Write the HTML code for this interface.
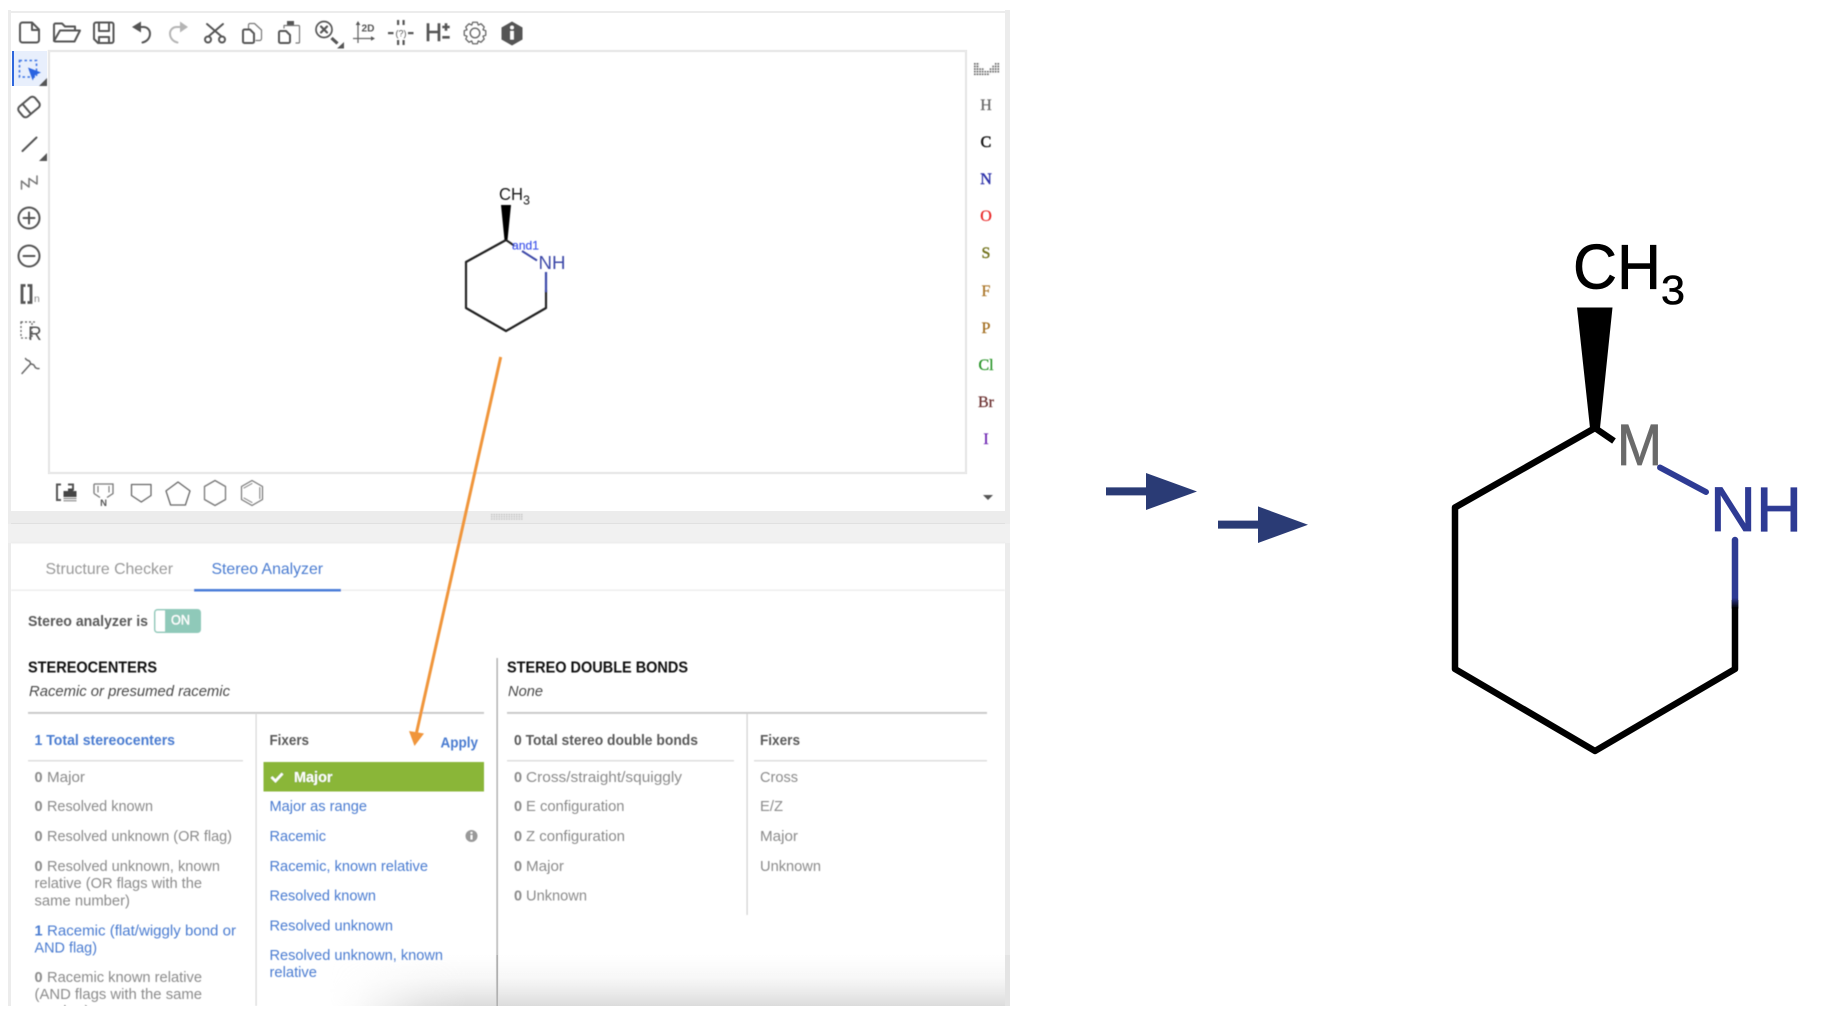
<!DOCTYPE html>
<html lang="en">
<head>
<meta charset="utf-8">
<title>Stereo Analyzer</title>
<style>
html,body{margin:0;padding:0;background:#fff;width:1824px;height:1028px;overflow:hidden}
svg{display:block;font-family:"Liberation Sans",sans-serif}
.g{fill:#8b8b8b;font-size:14.5px}
.gb{fill:#8b8b8b;font-size:14.5px;font-weight:700}
.b{fill:#4a7bd0;font-size:14.5px}
.bb{fill:#4a7bd0;font-size:14.5px;font-weight:700}
.d{fill:#5a5a5a;font-size:14.5px;font-weight:700}
.h{fill:#111;font-size:15.5px;font-weight:700}
.i{fill:#4a4a4a;font-size:14.5px;font-style:italic}
.el{font-family:"Liberation Serif",serif;font-size:16px;text-anchor:middle;stroke-width:.25px}
.ic{fill:none;stroke:#555;stroke-width:2;stroke-linejoin:round;stroke-linecap:round}
</style>
</head>
<body>
<svg width="1824" height="1028" viewBox="0 0 1824 1028" xmlns="http://www.w3.org/2000/svg">
<defs>
<filter id="soft" x="-2%" y="-2%" width="104%" height="104%"><feGaussianBlur stdDeviation="0.45"/></filter>
<filter id="soft2" x="-2%" y="-2%" width="104%" height="104%"><feGaussianBlur stdDeviation="0.3"/></filter>
<linearGradient id="vg" x1="0" y1="0" x2="0" y2="1"><stop offset="0" stop-color="#dcdcdc" stop-opacity="0"/><stop offset="0.45" stop-color="#dcdcdc" stop-opacity="0.22"/><stop offset="0.75" stop-color="#dcdcdc" stop-opacity="0.6"/><stop offset="1" stop-color="#dcdcdc"/></linearGradient>
<linearGradient id="hg" x1="0" y1="0" x2="1" y2="0"><stop offset="0" stop-color="#000"/><stop offset="0.04" stop-color="#222"/><stop offset="0.14" stop-color="#ccc"/><stop offset="0.2" stop-color="#fff"/><stop offset="1" stop-color="#fff"/></linearGradient>
<mask id="hm" maskUnits="userSpaceOnUse" x="330" y="950" width="680" height="60"><rect x="330" y="950" width="680" height="60" fill="url(#hg)"/></mask>
<clipPath id="pc"><rect x="0" y="0" width="1824" height="1006"/></clipPath>
<linearGradient id="nb" gradientUnits="userSpaceOnUse" x1="0" y1="598" x2="0" y2="608"><stop offset="0" stop-color="#2f3a94"/><stop offset="1" stop-color="#000"/></linearGradient>
<pattern id="dots" width="2.600" height="2.600" patternUnits="userSpaceOnUse" x="974" y="63"><rect width="1.700" height="1.700" fill="#666"/></pattern>
<pattern id="grip" width="2.500" height="2.200" patternUnits="userSpaceOnUse" x="491" y="514"><rect width="1.500" height="1.200" fill="#bdbdbd"/></pattern>
</defs>

<g clip-path="url(#pc)">
<!-- panel frame -->
<rect x="8" y="10" width="1002" height="996" fill="#fff"/>
<rect x="8" y="10" width="3" height="996" fill="#ececec"/>
<rect x="1005" y="10" width="5" height="996" fill="#ececec"/>
<rect x="8" y="11" width="1000" height="2" fill="#ececec"/>
<rect x="8" y="524" width="1002" height="19" fill="#f1f1f1"/>
<rect x="11" y="511" width="994" height="13" fill="#ececec"/>
<rect x="11" y="523" width="994" height="1" fill="#e0e0e0"/>
<!-- canvas -->
<rect x="49" y="51" width="917" height="422" fill="#fff" stroke="#e9e9e9" stroke-width="2.500"/>
<rect x="13" y="51" width="34" height="35" fill="#e8effc"/>
<rect x="12" y="51" width="2" height="35" fill="#2f67dd"/>

<g filter="url(#soft)">
<!-- splitter -->
<rect x="491" y="514" width="32" height="6.500" fill="url(#grip)"/>

<!-- top toolbar -->
<path class="ic" d="M20 25a2.500 2.500 0 0 1 2.500-2.500H32l7 7V40a2.500 2.500 0 0 1-2.500 2.500h-14A2.500 2.500 0 0 1 20 40Z M32 23v7h7" stroke-width="2.300"/>
<path class="ic" d="M54 41V25a1.500 1.500 0 0 1 1.500-1.500H62l3 3h10v4 M54 41l6-10.500h20L74.500 41.500H55" stroke-width="1.800"/>
<path class="ic" d="M94 24.500a2 2 0 0 1 2-2h15.500a2 2 0 0 1 2 2V41a2 2 0 0 1-2 2H98l-4-4Z M99 23v8h10V23 M99 43v-6h10v6" stroke-width="2.200"/>
<path class="ic" d="M136 27h8a6.500 6.500 0 0 1 6 6.500c0 4.500-3 8-7.500 9" stroke-width="2.500"/><path d="M141 21.500v11L132 27Z" fill="#555"/>
<path class="ic" d="M186 27h-9a6.500 6.500 0 0 0-7 6.500c0 4.500 3 8 7.500 9" stroke-width="2.300" style="stroke:#b5b5b5"/><path d="M180 21.500v11L188 27Z" fill="#b5b5b5"/>
<g class="ic" stroke-width="2.200"><path d="M207 24l14 12 M223 24l-14 12"/><circle cx="208" cy="39.500" r="3"/><circle cx="222" cy="39.500" r="3"/></g>
<path class="ic" d="M248.500 29v-4a1.500 1.500 0 0 1 1.500-1.500h4.500l7 6.500v8.500a2 2 0 0 1-2 2h-3.500" stroke-width="1.200" style="stroke:#777;stroke-width:1.200"/>
<path class="ic" d="M243 31a1.500 1.500 0 0 1 1.500-1.500H250l4 4v8a1.500 1.500 0 0 1-1.500 1.500h-8a1.500 1.500 0 0 1-1.500-1.500Z" stroke-width="2.200"/>
<path class="ic" d="M284 28v-2.500h14.500a1 1 0 0 1 1 1V42a1 1 0 0 1-1 1H296" style="stroke:#777;stroke-width:1.200"/><path class="ic" d="M279 32.500a1.500 1.500 0 0 1 1.500-1.500H286l4 4v6.500a1.500 1.500 0 0 1-1.500 1.500h-8a1.500 1.500 0 0 1-1.500-1.500Z" stroke-width="2.200"/><rect x="287" y="21" width="7" height="4" fill="#555"/>
<circle cx="324" cy="29.500" r="8" class="ic" style="stroke-width:1.700"/><path class="ic" d="M321 26.500l6 6 M327 26.500l-6 6" style="stroke-width:2.200"/><path d="M331.500 38l6 5.500" stroke="#555" stroke-width="3.200" fill="none"/><path d="M344 42v6.500h-7Z" fill="#555"/>
<path d="M358 24v19 M353 38.500h18" fill="none" stroke="#666" stroke-width="1.300"/><path d="M358 21l-2.300 4h4.600Z M375 38.500l-4-2.300v4.600Z" fill="#555"/>
<text x="361.500" y="31.500" font-size="10.500" font-weight="700" fill="#555" textLength="13" lengthAdjust="spacingAndGlyphs">2D</text>
<g fill="#555"><rect x="397" y="20" width="2.200" height="5"/><rect x="402.500" y="20" width="2.200" height="5"/><rect x="397" y="40" width="2.200" height="5"/><rect x="402.500" y="40" width="2.200" height="5"/><rect x="388" y="32" width="5.500" height="2.200"/><rect x="408" y="32" width="5.500" height="2.200"/></g>
<text x="401" y="36.500" font-size="9" fill="#555" text-anchor="middle">(?)</text>
<text x="425" y="41" font-size="24.700" fill="#555" stroke="#555" stroke-width=".5" textLength="17" lengthAdjust="spacingAndGlyphs">H</text>
<path d="M446 23.300v7.400 M442.300 27h7.400 M442.300 37.300h7.400" stroke="#555" stroke-width="2.600" fill="none"/>
<circle cx="475" cy="33" r="4.800" fill="none" stroke="#666" stroke-width="1.400"/>
<path transform="translate(475 33)" fill="none" stroke="#666" stroke-width="1.300" stroke-linejoin="round" d="M-2.290-10.760L2.290-10.760 3.290-7.950 5.990-9.230 9.230-5.990 7.950-3.290 10.760-2.290 10.760 2.290 7.950 3.290 9.230 5.990 5.990 9.230 3.290 7.950 2.290 10.760-2.290 10.760-3.290 7.950-5.990 9.230-9.230 5.990-7.950 3.290-10.760 2.290-10.760-2.290-7.950-3.290-9.230-5.990-5.990-9.230-3.290-7.950Z"/>
<path d="M512 21.500l10.500 6v12l-10.500 6-10.500-6v-12Z" fill="#555"/><circle cx="512" cy="27.500" r="1.900" fill="#fff"/><rect x="510.200" y="31" width="3.600" height="8.500" fill="#fff"/>

<!-- left toolbar -->
<rect x="19.500" y="60.500" width="17" height="16.500" fill="none" stroke="#3b73e6" stroke-width="1.600" stroke-dasharray="2.500 2.500"/>
<path d="M28 67.500l13 5-5.800 2.500-2.500 5.500Z" fill="#2a63e0"/>
<path d="M47 78v8h-8Z" fill="#555"/>
<g transform="rotate(-40 29 107)"><rect x="18.500" y="100.500" width="21" height="13" rx="3.500" class="ic" stroke-width="2.200"/><path d="M26 100.500v13" class="ic" stroke-width="1.800"/></g>
<path class="ic" d="M22.500 151l14-13.500" stroke-width="2.500"/>
<path d="M47 153v8h-8Z" fill="#555"/>
<path class="ic" d="M21.500 189v-8l7.500 6v-8.500l8 5.500v-8" style="stroke:#777;stroke-width:1.500"/>
<circle cx="29" cy="218" r="10.500" class="ic" stroke-width="2"/><path class="ic" d="M23.500 218h11 M29 212.500v11" stroke-width="2.400"/>
<circle cx="29" cy="256" r="10.500" class="ic" stroke-width="2"/><path class="ic" d="M23.500 256h11" stroke-width="2.400"/>
<path d="M25.500 285.500h-3.500v17h3.500 M27.500 285.500h3.500v17h-3.500" fill="none" stroke="#555" stroke-width="2.800"/>
<text x="34" y="302" font-size="10.500" fill="#888">n</text>
<rect x="21" y="322" width="11" height="16" fill="none" stroke="#666" stroke-width="1.300" stroke-dasharray="2 2"/><path d="M21 322h15" stroke="#666" stroke-width="1.300" stroke-dasharray="2 2"/>
<text x="28" y="340" font-size="19" fill="#555">R</text>
<path d="M22 373.500l8.500-9.500 M25.500 358.500c1 2.500 4 1.500 4.500 3.500s1 2 3 2.500 1 2.500 3 3.500 2 .5 3 .5" fill="none" stroke="#666" stroke-width="1.500" stroke-linecap="round"/>

<!-- template toolbar -->
<path d="M61 484.500h-4v15.500h4" fill="none" stroke="#555" stroke-width="2"/><path d="M68 484.500h5v6" fill="none" stroke="#555" stroke-width="2"/>
<rect x="63.500" y="491" width="13" height="6" fill="#444"/><rect x="68" y="488.500" width="5" height="3" fill="#444"/><path d="M63.500 498.500h13 M63.500 500.800h13" stroke="#777" stroke-width="1"/>
<path d="M94 484h19v9.500l-6 4 M100 497.500l-6-4 M94 484v9.500" fill="none" stroke="#777" stroke-width="1.300"/><path d="M98 486v6.500 M109 486v6.500" stroke="#777" stroke-width="1.100"/>
<text x="103.500" y="506" font-size="9.500" font-weight="700" fill="#555" text-anchor="middle">N</text>
<path d="M131.500 484.500h19.500v11l-9.700 6.500-9.800-6.500Z" class="ic" style="stroke:#666;stroke-width:1.300"/>
<path d="M178 482l12 8.900-4.600 14.100h-14.800L166 490.900Z" class="ic" style="stroke:#666;stroke-width:1.300"/>
<path d="M215 480.500l10.500 6v13l-10.500 6-10.500-6v-13Z" class="ic" style="stroke:#777;stroke-width:1.300"/>
<path d="M252 480.500l10.500 6v13l-10.500 6-10.500-6v-13Z" class="ic" style="stroke:#777;stroke-width:1.200"/><path d="M244 488l8-4.500 M259.800 487.500v11 M244 498l8 4.500" class="ic" style="stroke:#777;stroke-width:1"/>

<!-- element column -->
<g fill="url(#dots)"><rect x="974" y="63" width="5.200" height="13"/><rect x="979.200" y="68.200" width="5.200" height="7.800"/><rect x="984.400" y="70.800" width="5.200" height="5.200"/><rect x="989.600" y="68.200" width="2.600" height="5.200"/><rect x="992.200" y="65.600" width="2.600" height="7.800"/><rect x="994.800" y="63" width="5.200" height="10.400"/></g>
<text class="el" x="986" y="110" fill="#666" stroke="#666">H</text>
<text class="el" x="986" y="147" fill="#111" stroke="#111" style="stroke-width:.5px">C</text>
<text class="el" x="986" y="184" fill="#2a2ea8" stroke="#2a2ea8" style="stroke-width:.4px">N</text>
<text class="el" x="986" y="221" fill="#e82424" stroke="#e82424">O</text>
<text class="el" x="986" y="258" fill="#6f7019" stroke="#6f7019" style="stroke-width:.4px">S</text>
<text class="el" x="986" y="296" fill="#a87224" stroke="#a87224">F</text>
<text class="el" x="986" y="333" fill="#a06a1a" stroke="#a06a1a">P</text>
<text class="el" x="986" y="370" fill="#1f8f1f" stroke="#1f8f1f">Cl</text>
<text class="el" x="986" y="407" fill="#6a2f2f" stroke="#6a2f2f">Br</text>
<text class="el" x="986" y="444" fill="#6a22b0" stroke="#6a22b0">I</text>
<path d="M983 495h10l-5 5Z" fill="#555"/>

<!-- small molecule -->
<path d="M506 240L466 262V308L506 331L546 308V290" fill="none" stroke="#222" stroke-width="2.200" stroke-linejoin="round"/>
<path d="M546 292V272" stroke="#3d48a8" stroke-width="2.200"/>
<path d="M501 205h10l-3.500 35h-3Z" fill="#000"/>
<path d="M506 240l8 5.500" stroke="#222" stroke-width="2"/>
<path d="M522 251l15 9.500" stroke="#3d48a8" stroke-width="2"/>
<text x="499" y="200" font-size="17.500" fill="#1a1a1a" textLength="24" lengthAdjust="spacingAndGlyphs">CH</text>
<text x="523" y="204.500" font-size="12.500" fill="#1a1a1a">3</text>
<text x="512" y="249.500" font-size="12" fill="#3f55ea" stroke="#3f55ea" stroke-width=".2" textLength="27" lengthAdjust="spacingAndGlyphs">and1</text>
<text x="538.500" y="269" font-size="18" fill="#3d48a8" textLength="27" lengthAdjust="spacingAndGlyphs">NH</text>

<!-- tabs -->
<rect x="11" y="542" width="994" height="1.500" fill="#ececec"/>
<rect x="11" y="589.500" width="994" height="1.500" fill="#eeeeee"/>
<text x="45.500" y="574" font-size="16" fill="#999" textLength="127.500" lengthAdjust="spacingAndGlyphs">Structure Checker</text>
<text x="211.500" y="574" font-size="16" fill="#4a7bd0" textLength="111.500" lengthAdjust="spacingAndGlyphs">Stereo Analyzer</text>
<rect x="194" y="589" width="147" height="2.500" fill="#4a7bd8"/>

<text x="28" y="626" class="d" style="font-size:15px" textLength="120" lengthAdjust="spacingAndGlyphs">Stereo analyzer is</text>
<rect x="154.500" y="609.500" width="46" height="23" rx="3" fill="#8fc9b9" stroke="#8fc9b9"/>
<path d="M157.500 610.500H165v21h-7.500a2 2 0 0 1-2-2v-17a2 2 0 0 1 2-2Z" fill="#fff"/>
<text x="171" y="624.500" font-size="14" fill="#fff" stroke="#fff" stroke-width=".35" textLength="19" lengthAdjust="spacingAndGlyphs">ON</text>

<!-- stereocenters -->
<text x="28" y="672.500" class="h" style="font-size:16px" textLength="129" lengthAdjust="spacingAndGlyphs">STEREOCENTERS</text>
<text x="29" y="696" class="i" textLength="201" lengthAdjust="spacingAndGlyphs">Racemic or presumed racemic</text>
<rect x="28" y="712" width="456" height="1.800" fill="#c6c6c6"/>
<rect x="255.500" y="713" width="1.200" height="293" fill="#d8d8d8"/>
<rect x="496.500" y="658" width="1.300" height="348" fill="#a8a8a8"/>
<rect x="28" y="760" width="215" height="1.500" fill="#dedede"/>

<text x="34.500" y="745" class="bb" textLength="140.500" lengthAdjust="spacingAndGlyphs">1 Total stereocenters</text>
<text x="34.500" y="782" class="gb">0</text><text x="47" y="782" class="g" textLength="38" lengthAdjust="spacingAndGlyphs">Major</text>
<text x="34.500" y="811" class="gb">0</text><text x="47" y="811" class="g" textLength="106" lengthAdjust="spacingAndGlyphs">Resolved known</text>
<text x="34.500" y="841" class="gb">0</text><text x="47" y="841" class="g" textLength="185" lengthAdjust="spacingAndGlyphs">Resolved unknown (OR flag)</text>
<text x="34.500" y="871" class="gb">0</text><text x="47" y="871" class="g" textLength="173" lengthAdjust="spacingAndGlyphs">Resolved unknown, known</text>
<text x="34.500" y="888" class="g" textLength="167.500" lengthAdjust="spacingAndGlyphs">relative (OR flags with the</text>
<text x="34.500" y="905.500" class="g" textLength="95.500" lengthAdjust="spacingAndGlyphs">same number)</text>
<text x="34.500" y="935.500" class="bb">1</text><text x="47" y="935.500" class="b" textLength="189" lengthAdjust="spacingAndGlyphs">Racemic (flat/wiggly bond or</text>
<text x="34.500" y="952.500" class="b" textLength="62.500" lengthAdjust="spacingAndGlyphs">AND flag)</text>
<text x="34.500" y="982" class="gb">0</text><text x="47" y="982" class="g" textLength="155" lengthAdjust="spacingAndGlyphs">Racemic known relative</text>
<text x="34.500" y="999" class="g" textLength="167.500" lengthAdjust="spacingAndGlyphs">(AND flags with the same</text>
<text x="34.500" y="1016" class="g" textLength="55" lengthAdjust="spacingAndGlyphs">number)</text>

<!-- fixers -->
<text x="269.500" y="745" class="d" textLength="39.500" lengthAdjust="spacingAndGlyphs">Fixers</text>
<text x="440.500" y="747.500" class="bb" style="font-size:15px" textLength="37.500" lengthAdjust="spacingAndGlyphs">Apply</text>
<rect x="263.500" y="762" width="220.500" height="29.500" fill="#8ab637"/>
<path d="M271.500 777l4 4 7-7.500" fill="none" stroke="#fff" stroke-width="2.600"/>
<text x="294" y="782" font-size="14.500" font-weight="700" fill="#fff" textLength="38.500" lengthAdjust="spacingAndGlyphs">Major</text>
<text x="269.500" y="811" class="b" textLength="97.500" lengthAdjust="spacingAndGlyphs">Major as range</text>
<text x="269.500" y="841" class="b" textLength="56.500" lengthAdjust="spacingAndGlyphs">Racemic</text>
<circle cx="471.500" cy="836" r="6" fill="#999"/><rect x="470.500" y="835" width="2" height="4.500" fill="#fff"/><circle cx="471.500" cy="832.800" r="1.100" fill="#fff"/>
<text x="269.500" y="871" class="b" textLength="158.500" lengthAdjust="spacingAndGlyphs">Racemic, known relative</text>
<text x="269.500" y="900.500" class="b" textLength="106.500" lengthAdjust="spacingAndGlyphs">Resolved known</text>
<text x="269.500" y="930.500" class="b" textLength="123.500" lengthAdjust="spacingAndGlyphs">Resolved unknown</text>
<text x="269.500" y="960" class="b" textLength="173.500" lengthAdjust="spacingAndGlyphs">Resolved unknown, known</text>
<text x="269.500" y="977" class="b" textLength="47.500" lengthAdjust="spacingAndGlyphs">relative</text>

<!-- stereo double bonds -->
<text x="507" y="672.500" class="h" style="font-size:16px" textLength="181" lengthAdjust="spacingAndGlyphs">STEREO DOUBLE BONDS</text>
<text x="508" y="696" class="i" textLength="35" lengthAdjust="spacingAndGlyphs">None</text>
<rect x="507" y="712" width="480" height="1.800" fill="#c6c6c6"/>
<rect x="746.500" y="713" width="1.200" height="202" fill="#d0d0d0"/>
<rect x="507" y="760" width="227" height="1.500" fill="#dedede"/>
<rect x="754" y="760" width="233" height="1.500" fill="#dedede"/>
<text x="514" y="745" class="d" textLength="184" lengthAdjust="spacingAndGlyphs">0 Total stereo double bonds</text>
<text x="760" y="745" class="d" textLength="40" lengthAdjust="spacingAndGlyphs">Fixers</text>
<text x="514" y="782" class="gb">0</text><text x="526" y="782" class="g" textLength="156" lengthAdjust="spacingAndGlyphs">Cross/straight/squiggly</text>
<text x="514" y="811" class="gb">0</text><text x="526" y="811" class="g" textLength="98.500" lengthAdjust="spacingAndGlyphs">E configuration</text>
<text x="514" y="841" class="gb">0</text><text x="526" y="841" class="g" textLength="99" lengthAdjust="spacingAndGlyphs">Z configuration</text>
<text x="514" y="871" class="gb">0</text><text x="526" y="871" class="g" textLength="38" lengthAdjust="spacingAndGlyphs">Major</text>
<text x="514" y="900.500" class="gb">0</text><text x="526" y="900.500" class="g" textLength="61" lengthAdjust="spacingAndGlyphs">Unknown</text>
<text x="760" y="782" class="g" textLength="38" lengthAdjust="spacingAndGlyphs">Cross</text>
<text x="760" y="811" class="g" textLength="23" lengthAdjust="spacingAndGlyphs">E/Z</text>
<text x="760" y="841" class="g" textLength="38" lengthAdjust="spacingAndGlyphs">Major</text>
<text x="760" y="871" class="g" textLength="61" lengthAdjust="spacingAndGlyphs">Unknown</text>

<!-- orange arrow -->
<path d="M500.700 357L416 735" stroke="#f0953a" stroke-width="3" fill="none"/>
<path d="M409 731l15 2.500-9.500 12.500Z" fill="#f0953a"/>
</g>

<!-- bottom shading -->
<rect x="330" y="955" width="675" height="51" fill="url(#vg)" mask="url(#hm)"/>
<rect x="496.500" y="955" width="1.300" height="51" fill="#a8a8a8"/>
<rect x="1005" y="955" width="5" height="51" fill="#e4e4e4"/>
</g>

<!-- navy arrows -->
<g fill="#2b3a75" filter="url(#soft2)">
<path d="M1106 487.400H1146V473L1197 491.500 1146 510V495.400H1106Z"/>
<path d="M1218 520.600H1258V506.400L1308 524.800 1258 543V528.600H1218Z"/>
</g>

<!-- large molecule -->
<g filter="url(#soft2)">
<path d="M1614 441L1595 428 1455 507.500V669L1595 751 1735 669V600" fill="none" stroke="#000" stroke-width="6.500" stroke-linejoin="round"/>
<path d="M1735 540V608" stroke="url(#nb)" stroke-width="6.500" stroke-linecap="round"/>
<path d="M1660 467.500L1706 492" stroke="#2f3a94" stroke-width="6" stroke-linecap="round"/>
<path d="M1577 307.500h35.500L1600 428h-10Z" fill="#000"/>
<text x="1573" y="288.500" font-size="63" fill="#000" stroke="#000" stroke-width=".7" textLength="88" lengthAdjust="spacingAndGlyphs">CH</text>
<text x="1661" y="304" font-size="41" fill="#000" stroke="#000" stroke-width=".6" textLength="24" lengthAdjust="spacingAndGlyphs">3</text>
<text x="1617" y="465" font-size="58" fill="#6b6b6b" stroke="#6b6b6b" stroke-width=".8" textLength="45" lengthAdjust="spacingAndGlyphs">M</text>
<text x="1710" y="531" font-size="63" fill="#2f3a94" stroke="#2f3a94" stroke-width=".7" textLength="92" lengthAdjust="spacingAndGlyphs">NH</text>
</g>
</svg>
</body>
</html>
